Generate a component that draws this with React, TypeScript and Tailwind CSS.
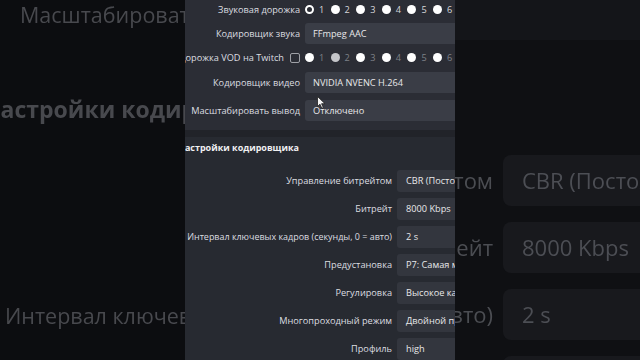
import React from "react";

const font = { fontFamily: '"Open Sans", "Noto Sans", sans-serif' };

function Radio({ kind }: { kind: "ring" | "white" | "grey" }) {
  if (kind === "ring")
    return <div className="w-[9px] h-[9px] rounded-full border-[2px] border-white shrink-0" />;
  if (kind === "grey") return <div className="w-[9px] h-[9px] rounded-full bg-[#c4c5c9] shrink-0" />;
  return <div className="w-[9px] h-[9px] rounded-full bg-white shrink-0" />;
}

function RadioGroup({ first, second, dim }: { first: "ring" | "white"; second: "white" | "grey"; dim: boolean }) {
  const items = [1, 2, 3, 4, 5, 6];
  return (
    <div className="flex items-center">
      {items.map((n) => (
        <div key={n} className="w-[25.6px] flex items-center gap-[5px] shrink-0">
          <Radio kind={n === 1 ? first : n === 2 ? second : "white"} />
          <span className={dim ? "text-[9.2px] text-[#7e8188]" : "text-[9.2px] text-[#d6d7da]"}>{n}</span>
        </div>
      ))}
    </div>
  );
}

function TopRow({ label, children, h, mt, extra }: { label: string; children: React.ReactNode; h: string; mt: string; extra?: React.ReactNode }) {
  return (
    <div className={`flex items-center shrink-0 ${h} ${mt}`}>
      <div className="w-[115px] shrink-0 flex justify-end items-center gap-[6px] whitespace-nowrap text-[9.2px] text-[#dcdde0]">
        <span>{label}</span>
        {extra}
      </div>
      <div className="ml-[5px] flex-1 h-full flex items-center">{children}</div>
    </div>
  );
}

function TopField({ text }: { text: string }) {
  return (
    <div className="w-full h-full bg-[#3a3d46] rounded-l-[3px] pl-[8px] flex items-center text-[9.2px] text-[#e8e8ea] whitespace-nowrap">
      {text}
    </div>
  );
}

function LowRow({ label, value, small }: { label: string; value: string; small?: boolean }) {
  return (
    <div className="flex items-center shrink-0 h-[22px] mt-[6px] first:mt-0">
      <div
        className={
          small
            ? "w-[207px] shrink-0 flex justify-end whitespace-nowrap text-[8.95px] text-[#dcdde0]"
            : "w-[207px] shrink-0 flex justify-end whitespace-nowrap text-[9.2px] text-[#dcdde0]"
        }
      >
        {label}
      </div>
      <div className="ml-[5px] flex-1 h-full bg-[#33363e] rounded-l-[3px] pl-[9px] flex items-center text-[9.2px] text-[#e8e8ea] whitespace-nowrap overflow-hidden">
        {value}
      </div>
    </div>
  );
}

function BgRow({ label, value, mt }: { label: string; value: string; mt: string }) {
  return (
    <div className={`flex items-center shrink-0 h-[51px] ${mt}`}>
      <div className="w-[38px] shrink-0 flex justify-end whitespace-nowrap text-[22px] font-medium text-[#4b4d52]">{label}</div>
      <div className="ml-[10px] flex-1 h-full bg-[#18191d] rounded-l-[8px] pl-[19px] flex items-center whitespace-nowrap text-[22px] font-medium text-[#4c4e54]">
        {value}
      </div>
    </div>
  );
}

export default function App() {
  return (
    <div className="w-[640px] h-[360px] flex overflow-hidden bg-[#0d0e11]" style={font}>
      {/* left blurred background */}
      <div className="w-[185px] shrink-0 h-full overflow-hidden flex flex-col bg-[#0c0d10] text-[#48494e] blur-[0.5px]">
        <div className="shrink-0 pt-[2px] pl-[20px] text-[21.5px] leading-[26px] font-medium whitespace-nowrap">Масштабировать вывод</div>
        <div className="shrink-0 mt-[67px] ml-[-17px] text-[23px] leading-[28px] font-bold whitespace-nowrap">Настройки кодировщика</div>
        <div className="shrink-0 mt-[180px] pl-[5px] text-[21.5px] leading-[26px] font-medium whitespace-nowrap">Интервал ключевых кадров</div>
      </div>

      {/* center panel */}
      <div className="w-[270px] shrink-0 h-full overflow-hidden flex flex-col relative bg-[#272a31]">
        <div className="bg-[#2b2d35] h-[130px] shrink-0 flex flex-col">
          <TopRow label="Звуковая дорожка" h="h-[20px]" mt="mt-0">
            <RadioGroup first="ring" second="white" dim={false} />
          </TopRow>
          <TopRow label="Кодировщик звука" h="h-[21px]" mt="mt-[3px]">
            <TopField text="FFmpeg AAC" />
          </TopRow>
          <TopRow
            label="Дорожка VOD на Twitch"
            h="h-[22px]"
            mt="mt-[3px]"
            extra={<div className="w-[10px] h-[10px] border border-[#9fa1a7] rounded-[2px] shrink-0" />}
          >
            <RadioGroup first="white" second="grey" dim={true} />
          </TopRow>
          <TopRow label="Кодировщик видео" h="h-[21px]" mt="mt-[3px]">
            <TopField text="NVIDIA NVENC H.264" />
          </TopRow>
          <TopRow label="Масштабировать вывод" h="h-[21px]" mt="mt-[7px]">
            <TopField text="Отключено" />
          </TopRow>
        </div>
        <div className="h-[7px] shrink-0 bg-[#212329]" />
        <div className="flex flex-col shrink-0">
          <div className="mt-[4px] ml-[-7px] h-[14px] flex items-center text-[9px] font-bold text-[#f0f0f2] whitespace-nowrap">
            Настройки кодировщика
          </div>
          <div className="mt-[15px] flex flex-col">
            <LowRow label="Управление битрейтом" value="CBR (Постоянный битрейт)" />
            <LowRow label="Битрейт" value="8000 Kbps" />
            <LowRow label="Интервал ключевых кадров (секунды, 0 = авто)" value="2 s" small />
            <LowRow label="Предустановка" value="P7: Самая медленная" />
            <LowRow label="Регулировка" value="Высокое качество" />
            <LowRow label="Многопроходный режим" value="Двойной проход" />
            <LowRow label="Профиль" value="high" />
          </div>
        </div>
        {/* mouse cursor */}
        <svg className="absolute left-[132px] top-[96px]" width="9" height="13" viewBox="0 0 9 13">
          <path d="M0.5 0.5 L0.5 10.5 L3 8.2 L4.8 12.3 L6.3 11.6 L4.6 7.7 L8 7.7 Z" fill="#f4f4f4" stroke="#202020" strokeWidth="0.8" />
        </svg>
      </div>

      {/* right blurred background */}
      <div className="flex-1 h-full overflow-hidden flex flex-col bg-[#0f1013] blur-[0.5px]">
        <div className="h-[40px] shrink-0 bg-[#141519]" />
        <BgRow label="битрейтом" value="CBR (Постоянный битрейт)" mt="mt-[115px]" />
        <BgRow label="Битрейт" value="8000 Kbps" mt="mt-[16px]" />
        <BgRow label="авто)" value="2 s" mt="mt-[16px]" />
        <BgRow label="новка" value="P7: Самая медленная" mt="mt-[16px]" />
      </div>
    </div>
  );
}
